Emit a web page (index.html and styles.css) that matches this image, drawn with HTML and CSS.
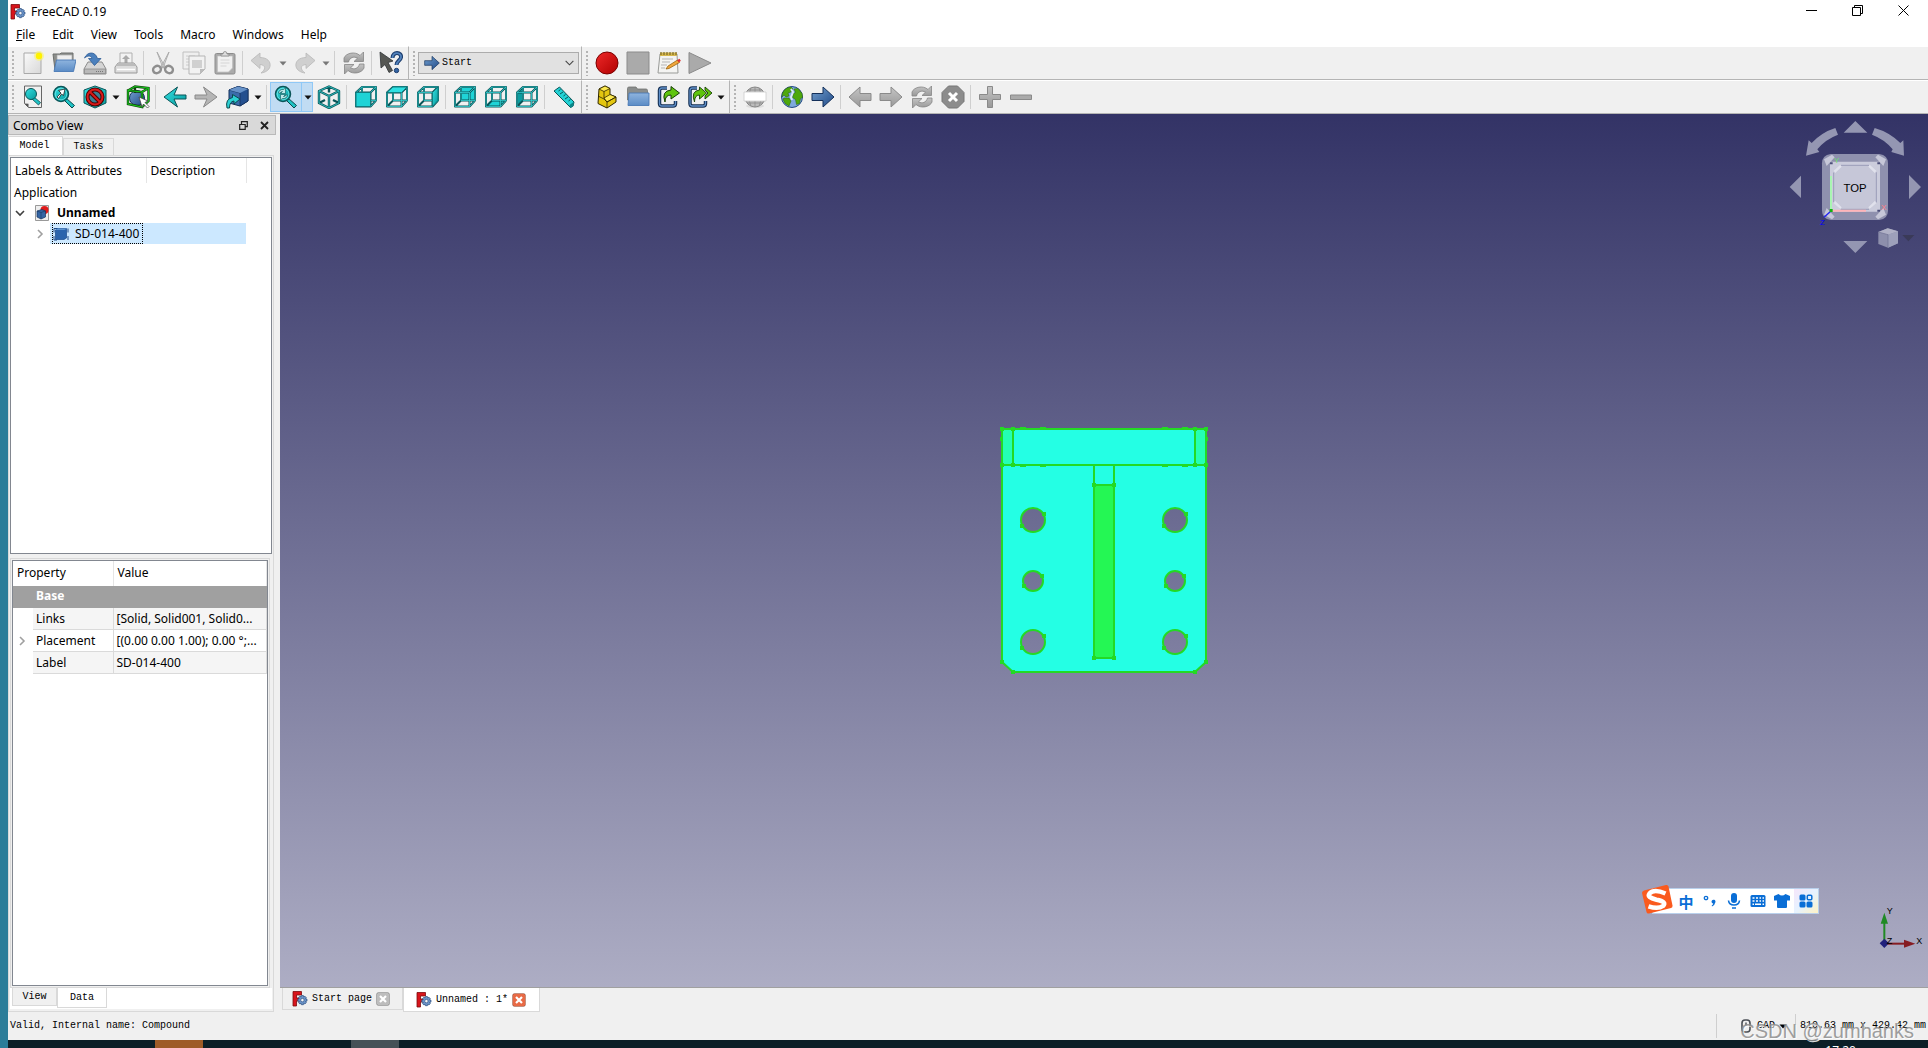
FILE: index.html
```
<!DOCTYPE html>
<html lang="en">
<head>
  <meta charset="UTF-8" />
  <meta name="viewport" content="width=device-width, initial-scale=1.0" />
  <title>FreeCAD 0.19</title>
  <link rel="stylesheet" href="styles.css">
</head>
<body>
  <!-- Shared icons -->
  <svg class="defs" aria-hidden="true">
    <defs>
      <linearGradient id="cyan" x1="0" y1="0" x2="1" y2="1"><stop offset="0" stop-color="#34e0e2"/><stop offset="1" stop-color="#06989a"/></linearGradient>
      <linearGradient id="blue" x1="0" y1="0" x2="1" y2="1"><stop offset="0" stop-color="#729fcf"/><stop offset="1" stop-color="#204a87"/></linearGradient>
      <linearGradient id="grey" x1="0" y1="0" x2="0" y2="1"><stop offset="0" stop-color="#c4c4c4"/><stop offset="1" stop-color="#999"/></linearGradient>
      <linearGradient id="paper" x1="0" y1="0" x2="1" y2="1"><stop offset="0" stop-color="#fafafa"/><stop offset="1" stop-color="#d8d8d8"/></linearGradient>
      <linearGradient id="folder" x1="0" y1="0" x2="0" y2="1"><stop offset="0" stop-color="#8fb4de"/><stop offset="1" stop-color="#5b8cc6"/></linearGradient>
      <linearGradient id="red" x1="0" y1="0" x2="1" y2="1"><stop offset="0" stop-color="#ef2929"/><stop offset="1" stop-color="#b00000"/></linearGradient>
    </defs>
    <symbol id="i-app" viewBox="0 0 16 16">
      <path d="M1 .500h8.500v3.500H4.500v3H7v3H4.500v5H1z" fill="#d8141c" stroke="#7c0a0e" stroke-width=".8"/>
      <path d="M9.400 4.500h2l.3 1.500 1.200-.8 1.400 1.400-.8 1.200 1.500.3v2l-1.500.3.8 1.200-1.400 1.400-1.200-.8-.3 1.500h-2l-.3-1.500-1.200.8-1.400-1.400.8-1.200-1.500-.3v-2l1.500-.3-.8-1.200 1.400-1.400 1.200.8z" fill="#6b94c9" stroke="#2a4d80" stroke-width=".7"/>
      <circle cx="10.400" cy="9.100" r="1.700" fill="#f4f4f4" stroke="#2a4d80" stroke-width=".6"/>
    </symbol>
    <symbol id="i-lens" viewBox="0 0 24 24">
      <path d="M14 13l8.500 7.500-2.500 2.500-8-8z" fill="#1fc3c6" stroke="#0b4a4d"/>
      <circle cx="9" cy="9" r="7.500" fill="url(#cyan)" stroke="#0b5558" stroke-width="1.500"/>
      <circle cx="9" cy="9" r="5.800" fill="none" stroke="#7beaec" stroke-width=".7"/>
    </symbol>
    <symbol id="i-wire" viewBox="0 0 24 24">
      <path d="M2 7.500h14.500v14H2zM8 2h14v13.500H8zM2 7.500L8 2M16.500 7.500L22 2M16.500 21.500L22 15.500M2 21.500l6-6" fill="none" stroke="#0a5558" stroke-width="2" stroke-linejoin="round"/>
      <path d="M2 7.500h14.500v14H2zM8 2h14v13.500H8M8 2v13.500M2 7.500L8 2M16.500 7.500L22 2M16.500 21.500L22 15.500" fill="none" stroke="#35cfd2" stroke-width=".8"/>
    </symbol>
    <symbol id="i-arrow-r" viewBox="0 0 24 24"><path d="M1 8.500h11V2l11 10-11 10v-6.500H1z"/></symbol>
    <symbol id="i-arrow-l" viewBox="0 0 24 24"><path d="M23 8.500H12V2L1 12l11 10v-6.500h11z"/></symbol>
    <symbol id="i-thin-l" viewBox="0 0 24 24"><path d="M23 10H11l3.500-8L1 12l13.500 10-3.500-8h12z"/></symbol>
    <symbol id="i-thin-r" viewBox="0 0 24 24"><path d="M1 10h12L9.500 2 23 12 9.500 22l3.500-8H1z"/></symbol>
    <symbol id="i-refresh" viewBox="0 0 24 24">
      <path d="M2 11V7c2-5 11-7 16-2.500L21.500 1v9.500H12l3.500-3.300C12 5 7.500 6.500 6.500 11z" fill="url(#grey)" stroke="#858585" stroke-width=".8"/>
      <path d="M22 13v4c-2 5-11 7-16 2.500L2.500 23v-9.500H12l-3.500 3.300C12 19 16.500 17.500 17.500 13z" fill="url(#grey)" stroke="#858585" stroke-width=".8"/>
    </symbol>
    <symbol id="i-folder" viewBox="0 0 24 24">
      <path d="M1.500 3.500q0-1.500 1.500-1.500h7l1.500 2H20q1.500 0 1.500 1.500V15h-20z" fill="#8a8d8c" stroke="#70726f" stroke-width=".8"/>
      <path d="M3 8h20v12.500H2z" fill="url(#folder)" stroke="#4a79b5" stroke-width=".9"/>
    </symbol>
    <symbol id="i-down" viewBox="0 0 8 5"><path d="M.5.500h7L4 4.500z" fill="currentColor"/></symbol>
    <symbol id="i-close" viewBox="0 0 14 14">
      <rect x=".5" y=".5" width="13" height="13" rx="2" fill="currentColor" stroke="#0003"/>
      <path d="M4 4l6 6M10 4l-6 6" stroke="#fff" stroke-width="2.200"/>
    </symbol>
  </svg>

  <div class="desktop-edge"></div>
  <div class="app">
    <header class="titlebar">
      <svg class="icon-16"><use href="#i-app"/></svg>
      <h1>FreeCAD 0.19</h1>
      <div class="window-buttons">
        <button aria-label="Minimize"><svg viewBox="0 0 11 11"><path d="M0 5.500h11" stroke="#000"/></svg></button>
        <button aria-label="Restore"><svg viewBox="0 0 11 11"><path d="M.5 2.500h8v8h-8zM2.500 2V.500h8v8H9" fill="none" stroke="#000"/></svg></button>
        <button aria-label="Close"><svg viewBox="0 0 11 11"><path d="M.5.500l10 10M10.500.500l-10 10" stroke="#000"/></svg></button>
      </div>
    </header>

    <nav class="menubar">
      <button><u>F</u>ile</button>
      <button>Edit</button>
      <button>View</button>
      <button>Tools</button>
      <button>Macro</button>
      <button>Windows</button>
      <button>Help</button>
    </nav>

    <!-- File, workbench and macro toolbars -->
    <div class="toolbar-row">
      <div class="toolbar">
        <span class="grip"></span>
        <button class="tool" aria-label="New"><svg viewBox="0 0 24 24"><path d="M3 2h17v20.500H3z" fill="url(#paper)" stroke="#a9a9a9"/><circle cx="18" cy="5" r="5" fill="#fbf36a" opacity=".6"/><circle cx="18" cy="5" r="3.200" fill="#fff200"/></svg></button>
        <button class="tool" aria-label="Open"><svg viewBox="0 0 24 24"><path d="M1 3h7l1-1h12v7l-2 10H3z" fill="#8d8f8c" stroke="#6d6f6c"/><path d="M5 4h15v9H5z" fill="#eee" stroke="#aaa" stroke-width=".7"/><path d="M4.500 9H24l-2.500 11.500H2z" fill="url(#folder)" stroke="#4a79b5" stroke-width=".9"/></svg></button>
        <button class="tool" aria-label="Save"><svg viewBox="0 0 24 24"><path d="M5 11h14l4 7v5H1v-5z" fill="#d5d5d5" stroke="#8c8c8c"/><path d="M1.500 18h21v4.500h-21z" fill="#b9b9b9" stroke="#8c8c8c" stroke-width=".8"/><path d="M13 20.500h8" stroke="#777" stroke-dasharray="1 1"/><path d="M1.500 7C4 1 12-.5 14.500 7.500H18l-6.500 7-6-7h3.300C8 4 4.500 4.500 1.500 7z" fill="#4b80bd" stroke="#2c5b96" stroke-width=".8"/></svg></button>
        <button class="tool" aria-label="Print"><svg viewBox="0 0 24 24"><path d="M6 2h12v12H6z" fill="#f2f2f2" stroke="#b0b0b0"/><path d="M12 4l4 4h-2.500v4h-3V8H8z" fill="#aaa"/><path d="M4 12h16l3 4v6H1v-6z" fill="#dcdcdc" stroke="#999"/><path d="M4 12h16l1.500 3h-19z" fill="#bbb"/><path d="M3 18.500h18" stroke="#fff" stroke-width="1.500"/></svg></button>
        <span class="sep"></span>
        <button class="tool" aria-label="Cut"><svg viewBox="0 0 24 24"><path d="M6 1l8 15-2 1zM18 1l-8 15 2 1z" fill="#e5e5e5" stroke="#a8a8a8" stroke-width=".9"/><g fill="none" stroke="#8f8f8f" stroke-width="2.500"><ellipse cx="6" cy="18.500" rx="4" ry="3.500" transform="rotate(-30 6 18.500)"/><ellipse cx="18" cy="18.500" rx="4" ry="3.500" transform="rotate(30 18 18.500)"/></g></svg></button>
        <button class="tool" aria-label="Copy"><svg viewBox="0 0 24 24"><path d="M1 1h16v17H1z" fill="#efefef" stroke="#c0c0c0"/><path d="M4 5h9M4 8h4M4 11h4M4 14h4" stroke="#ccc"/><path d="M7 5h16v13l-5 5H7z" fill="#f2f2f2" stroke="#b5b5b5"/><path d="M10 9h10v8H10z" fill="#d0d0d0"/><path d="M18 23v-5h5z" fill="#bbb"/></svg></button>
        <button class="tool" aria-label="Paste"><svg viewBox="0 0 24 24"><rect x="2" y="2.500" width="20" height="20.500" rx="1.500" fill="#aaa" stroke="#8d8d8d"/><path d="M4.500 5h15v12l-4 4h-11z" fill="#f1f1f1" stroke="#c0c0c0" stroke-width=".7"/><path d="M8 5V3h2q0-2.500 2-2.500T14 3h2v2z" fill="#ddd" stroke="#888" stroke-width=".8"/><path d="M7.500 9h9M7.500 12h9M7.500 15h6" stroke="#d5d5d5"/></svg></button>
        <span class="sep"></span>
        <button class="tool" aria-label="Undo"><svg viewBox="0 0 24 24"><path d="M1 9.500L10 2v4.500c7 0 11 4 10 9-1 4-5 6-9 6.500 5-3.500 5-8-1-8.500v4z" fill="#cfcfcf" stroke="#b8b8b8" stroke-width=".8"/></svg></button>
        <button class="drop" aria-label="Undo history"><svg><use href="#i-down"/></svg></button>
        <button class="tool" aria-label="Redo"><svg viewBox="0 0 24 24"><path d="M22 9.500L13 2v4.500c-7 0-11 4-10 9 1 4 5 6 9 6.500-5-3.500-5-8 1-8.500v4z" fill="#cfcfcf" stroke="#b8b8b8" stroke-width=".8"/></svg></button>
        <button class="drop" aria-label="Redo history"><svg><use href="#i-down"/></svg></button>
        <span class="sep"></span>
        <button class="tool" aria-label="Refresh"><svg><use href="#i-refresh"/></svg></button>
        <span class="sep"></span>
        <button class="tool" aria-label="What's this?"><svg viewBox="0 0 24 24"><path d="M1 1l13 9-5 1.500 4.500 8-3.500 2-4-8L2 17z" fill="#555753" stroke="#2e3436" stroke-width=".8"/><path d="M13.500 7c0-7 9.500-6 8.500-.5-.5 3-4.500 3.500-4.500 7.500" fill="none" stroke="#1d3e6e" stroke-width="4"/><path d="M13.500 7c0-7 9.500-6 8.500-.5-.5 3-4.500 3.500-4.500 7.500" fill="none" stroke="#5383bd" stroke-width="1.800"/><circle cx="17.500" cy="19.500" r="2.200" fill="#3465a4" stroke="#1d3e6e"/></svg></button>
      </div>
      <div class="toolbar">
        <span class="grip"></span>
        <div class="workbench">
          <svg class="icon-16" fill="url(#blue)" stroke="#14305a"><use href="#i-arrow-r"/></svg>
          <select aria-label="Workbench"><option>Start</option></select>
          <svg class="chevron" viewBox="0 0 10 6"><path d="M.7.700L5 5 9.300.700" fill="none" stroke="#444" stroke-width="1.200"/></svg>
        </div>
      </div>
      <div class="toolbar wide">
        <span class="grip"></span>
        <button class="tool" aria-label="Record macro"><svg viewBox="0 0 24 24"><circle cx="12" cy="12" r="11" fill="url(#red)" stroke="#7a0000"/></svg></button>
        <button class="tool" aria-label="Stop macro"><svg viewBox="0 0 24 24"><path d="M1 1h22v22H1z" fill="#aaa" stroke="#8b8b8b"/></svg></button>
        <button class="tool" aria-label="Macros"><svg viewBox="0 0 24 24"><path d="M3 3h17l1 19H1z" fill="#f4f4f2" stroke="#999b98"/><path d="M3 1.500h17v3.500H3z" fill="#d6b84e"/><path d="M4 1v3M7 1v3M10 1v3M13 1v3M16 1v3M19 1v3" stroke="#6a5a20"/><path d="M5 8h11M5 11h8M4 14h6M4 17h4" stroke="#b5b5b5"/><path d="M9 18l2-3L20.500 9l2 2.500L12 17.500z" fill="#f0a63c" stroke="#8f5902" stroke-width=".7"/><path d="M20 9.200l2.500-1.400 1.300 2-1.800 1.800z" fill="#dd3434"/></svg></button>
        <button class="tool" aria-label="Execute macro"><svg viewBox="0 0 24 24"><path d="M1 1.500L23 12 1 22.500z" fill="#aaa" stroke="#8b8b8b"/></svg></button>
      </div>
    </div>

    <!-- View, structure and navigation toolbars -->
    <div class="toolbar-row">
      <div class="toolbar">
        <span class="grip"></span>
        <button class="tool" aria-label="Fit all"><svg viewBox="0 0 24 24"><path d="M3.500 1h17v21.500h-13l-4-4z" fill="#f0f0f0" stroke="#666"/><path d="M3.500 18.500l4 .3v3.700z" fill="#555"/><path d="M13 12l6.500 5.500-2 2.500-6.500-6z" fill="#1fc3c6" stroke="#0b4a4d" stroke-width=".8"/><circle cx="10" cy="9" r="5.500" fill="url(#cyan)" stroke="#0b5558"/></svg></button>
        <button class="tool" aria-label="Fit selection"><svg viewBox="0 0 24 24"><use href="#i-lens"/><path d="M5 12l4-4-2.500-2.500L13 4l-1.500 6.500L9.500 9 6.500 13.500z" fill="#fff" stroke="#222" stroke-width=".8"/></svg></button>
        <button class="tool" aria-label="Draw style"><svg viewBox="0 0 24 24"><path d="M12 1l11 4v13l-11 5L1 18V5z" fill="url(#cyan)" stroke="#0b5558"/><circle cx="12" cy="12" r="7.500" fill="#3a7f94" stroke="#4c0000" stroke-width="4"/><path d="M7 7l10 10" stroke="#4c0000" stroke-width="4"/><circle cx="12" cy="12" r="7.500" fill="none" stroke="#d81b1b" stroke-width="2"/><path d="M7 7l10 10" stroke="#d81b1b" stroke-width="2"/></svg></button>
        <button class="drop dark" aria-label="Draw styles"><svg><use href="#i-down"/></svg></button>
        <button class="tool" aria-label="Bounding box"><svg viewBox="0 0 24 24"><circle cx="11" cy="13" r="7.500" fill="url(#blue)" stroke="#17355f"/><path d="M2 5.500l14 1.500v15L2 19zM2 5.500L9 1.500l13.500 1.500v13L16 22M16 7l6.500-4M9 1.500V8" fill="none" stroke="#123f10" stroke-width="2.400"/><path d="M2 5.500l14 1.500v15L2 19zM2 5.500L9 1.500l13.500 1.500v13L16 22M16 7l6.500-4" fill="none" stroke="#17c51a" stroke-width="1.200"/><path d="M13 12l9 4-3 1.500 4 4-1.500 1.500-4-4-1.500 3z" fill="#fff" stroke="#444" stroke-width=".8"/></svg></button>
        <span class="sep"></span>
        <button class="tool" aria-label="Go back"><svg fill="url(#cyan)" stroke="#0b5558"><use href="#i-thin-l"/></svg></button>
        <button class="tool" aria-label="Go forward"><svg fill="#b5b5b5" stroke="#8a8a8a"><use href="#i-thin-r"/></svg></button>
        <button class="tool" aria-label="Linked object"><svg viewBox="0 0 24 24"><path d="M4 5l9-3.500L23 4v12l-8 5-11-3z" fill="#3b6cab" stroke="#14305a"/><path d="M4 5l11 3v13l8-5V4l-10-2.500z" fill="#25508f" stroke="#14305a" stroke-width=".8"/><path d="M4 5l9-3.500L23 4l-8 4z" fill="#6792c8"/><path d="M2 23q-2-9 5.500-10.500V9.500L15 14l-6 5v-3q-4.500.5-4.500 7z" fill="#2cd0d3" stroke="#0b4a4d"/></svg></button>
        <button class="drop dark" aria-label="Link navigation"><svg><use href="#i-down"/></svg></button>
        <span class="sep"></span>
        <div class="split">
          <button class="tool" aria-label="Sync view"><svg viewBox="0 0 24 24"><use href="#i-lens"/><path d="M4.500 8q1-4 5-3.500l2-1.500v5.500H6.500l2-2q-2 0-2.500 2zM13.500 10q-1 4-5 3.500l-2 1.500V9.500h5l-2 2q2 0 2.500-1.500z" fill="#bfe8ea" stroke="#0b5558" stroke-width=".6"/></svg></button>
          <button class="drop dark" aria-label="Sync view options"><svg><use href="#i-down"/></svg></button>
        </div>
        <button class="tool" aria-label="Isometric"><svg viewBox="0 0 24 24"><path d="M12 1.500l10 4.500v12l-10 5-10-5V6zM2 6l10 5 10-5M12 11v12M12 1.500v6M2 18l6-3M22 18l-6-3" fill="none" stroke="#0a5558" stroke-width="2.400" stroke-linejoin="round"/><path d="M12 1.500l10 4.500v12l-10 5-10-5V6zM2 6l10 5 10-5M12 11v12" fill="none" stroke="#35cfd2" stroke-width=".8"/></svg></button>
        <span class="sep"></span>
        <button class="tool" aria-label="Front"><svg viewBox="0 0 24 24"><use href="#i-wire"/><path d="M2 7.500h14.500v14H2z" fill="#1fd3d6" stroke="#0a6a6d" stroke-width=".8"/></svg></button>
        <button class="tool" aria-label="Top"><svg viewBox="0 0 24 24"><use href="#i-wire"/><path d="M2 7.500L8 2h14l-5.500 5.500z" fill="#2ee0e2" stroke="#0a6a6d" stroke-width=".8"/></svg></button>
        <button class="tool" aria-label="Right"><svg viewBox="0 0 24 24"><use href="#i-wire"/><path d="M16.500 7.500L22 2v13.500l-5.500 6z" fill="url(#cyan)" stroke="#0a6a6d" stroke-width=".8"/></svg></button>
        <span class="sep"></span>
        <button class="tool" aria-label="Rear"><svg viewBox="0 0 24 24"><path d="M8 2h14v13.500H8z" fill="#1fd3d6"/><use href="#i-wire"/></svg></button>
        <button class="tool" aria-label="Bottom"><svg viewBox="0 0 24 24"><path d="M2 21.500l6-6h14l-5.500 6z" fill="#1fd3d6"/><use href="#i-wire"/></svg></button>
        <button class="tool" aria-label="Left"><svg viewBox="0 0 24 24"><path d="M2 7.500L8 2v13.500l-6 6z" fill="#0b9da0"/><use href="#i-wire"/></svg></button>
        <span class="sep"></span>
        <button class="tool" aria-label="Measure"><svg viewBox="0 0 24 24"><path d="M2 6l5.500-4L22 17l-1 4-2.500 1.500z" fill="#23d2d5" stroke="#0b5558"/><path d="M17.500 20l4-3v4l-3 2z" fill="#0b8587"/><path d="M8.500 4.500l-2 1.500M11 7L8 9M13.500 9.500l-2 1.500M16 12l-3 2M18.500 14.500l-2 1.500" stroke="#0b5558"/></svg></button>
      </div>
      <div class="toolbar">
        <span class="grip"></span>
        <button class="tool" aria-label="Create part"><svg viewBox="0 0 24 24"><path d="M4 4l6-3 5 2.500v6l6 2.500v5L12 23l-9-4.500z" fill="#e3c610" stroke="#2f2700"/><path d="M4 4l6-3 5 2.500-6 3zM9 13l6-3.500 6 2.500-9 5z" fill="#fce94f" stroke="#2f2700" stroke-width=".8"/><path d="M9 6.500V13M3 11l6 3 3 3v6M12 17l9-5" fill="none" stroke="#2f2700" stroke-width=".8"/></svg></button>
        <button class="tool" aria-label="Create group"><svg><use href="#i-folder"/></svg></button>
        <button class="tool" aria-label="Make link"><svg viewBox="0 0 24 24"><path d="M10 3H5Q2.500 3 2.500 5.500v13Q2.500 21 5 21h11q2.500 0 2.500-2.500V16" fill="none" stroke="#152f52" stroke-width="3.500"/><path d="M10 3H5Q2.500 3 2.500 5.500v13Q2.500 21 5 21h11q2.500 0 2.500-2.500V16" fill="none" stroke="#5f8fc8" stroke-width="1.300"/><path d="M8 17q-4-11 6-12V1.500L22.500 8 14 14v-4q-6 0-6 7z" fill="#5fc40d" stroke="#173f04"/></svg></button>
        <button class="tool" aria-label="Link actions"><svg viewBox="0 0 24 24"><path d="M9 3H4.500Q2 3 2 5.500v13Q2 21 4.500 21H15q2.500 0 2.500-2.500V16" fill="none" stroke="#152f52" stroke-width="3.500"/><path d="M9 3H4.500Q2 3 2 5.500v13Q2 21 4.500 21H15q2.500 0 2.500-2.500V16" fill="none" stroke="#5f8fc8" stroke-width="1.300"/><path d="M6.500 17q-4-11 5-12V2l7 6-7 6v-4q-5 0-5 7zM17 2l7 6-7 6v-3l3-3-3-3z" fill="#5fc40d" stroke="#173f04" stroke-width=".9"/></svg></button>
        <button class="drop dark" aria-label="More link actions"><svg><use href="#i-down"/></svg></button>
      </div>
      <div class="toolbar wide">
        <span class="grip"></span>
        <button class="tool" aria-label="Open website"><svg viewBox="0 0 24 24"><ellipse cx="12" cy="21" rx="9" ry="2" fill="#ddd"/><circle cx="12" cy="12" r="10" fill="#bbb" stroke="#888"/><path d="M5 5h14M4 18h16M12 2v20M8 3q-4 9 0 18M16 3q4 9 0 18" fill="none" stroke="#888" stroke-width=".7"/><path d="M1 7h22v9H1z" fill="#fff" stroke="#ccc" stroke-width=".8"/></svg></button>
        <span class="sep"></span>
        <button class="tool" aria-label="Start page"><svg viewBox="0 0 24 24"><circle cx="12" cy="12" r="10.500" fill="#7ea9dc" stroke="#234a85"/><path d="M4 5.500Q7 2 11 2l2 2-2 3-3 1 1 3-3 1-2-2-2 2q0-4 2-6.500zM4 13l5 0 2 3-2 5q-5-2-6-7zM14 4l4-.5 4 5 .5 4-2 1-1 5-3 1-1-5-3-2 1-4 2-1z" fill="#4ea80d" stroke="#2a6304" stroke-width=".5"/><path d="M11 4l2 3-2 5 1 3" stroke="#dce9f7" stroke-width="2" fill="none"/></svg></button>
        <button class="tool" aria-label="Go"><svg fill="url(#blue)" stroke="#14305a"><use href="#i-arrow-r"/></svg></button>
        <span class="sep"></span>
        <button class="tool" aria-label="Previous page"><svg fill="url(#grey)" stroke="#8a8a8a"><use href="#i-arrow-l"/></svg></button>
        <button class="tool" aria-label="Next page"><svg fill="url(#grey)" stroke="#8a8a8a"><use href="#i-arrow-r"/></svg></button>
        <button class="tool" aria-label="Reload page"><svg><use href="#i-refresh"/></svg></button>
        <button class="tool" aria-label="Stop loading"><svg viewBox="0 0 24 24"><path d="M7.500 1h9L23 7.500v9L16.500 23h-9L1 16.500v-9z" fill="#8c8c8c" stroke="#777"/><path d="M8 8l8 8M16 8l-8 8" stroke="#fff" stroke-width="3"/></svg></button>
        <span class="sep"></span>
        <button class="tool" aria-label="Zoom in"><svg viewBox="0 0 24 24"><path d="M9.500 1.500h5v8h8v5h-8v8h-5v-8h-8v-5h8z" fill="url(#grey)" stroke="#8a8a8a"/></svg></button>
        <button class="tool" aria-label="Zoom out"><svg viewBox="0 0 24 24"><path d="M1.500 10h21v4.500h-21z" fill="#aaa" stroke="#8a8a8a"/></svg></button>
      </div>
    </div>

    <main class="workspace">
      <!-- Combo view -->
      <aside class="dock">
        <div class="dock-title">
          <h2>Combo View</h2>
          <button aria-label="Float"><svg viewBox="0 0 9 9"><path d="M.7 3.500h5.500v4.800H.700zM2.500 3V.700h5.800v5H6.500" fill="none" stroke="#222" stroke-width="1.200"/></svg></button>
          <button aria-label="Close panel"><svg viewBox="0 0 9 9"><path d="M1 1l7 7M8 1L1 8" stroke="#222" stroke-width="1.800"/></svg></button>
        </div>
        <div class="tabs-north">
          <button class="active">Model</button>
          <button>Tasks</button>
        </div>
        <div class="pane">
          <div class="tree">
            <table>
              <colgroup><col class="col-label"><col class="col-desc"><col></colgroup>
              <thead><tr><th>Labels &amp; Attributes</th><th>Description</th><th></th></tr></thead>
              <tbody>
                <tr class="root"><td colspan="3">Application</td></tr>
                <tr><td colspan="3">
                  <div class="node">
                    <svg class="arrow" viewBox="0 0 10 10"><path d="M1 3l4 4 4-4" fill="none" stroke="#404040" stroke-width="1.600"/></svg>
                    <svg class="icon-16" viewBox="0 0 16 16"><path d="M1.500.500h13v15h-13z" fill="#eee" stroke="#999"/><circle cx="10.500" cy="5" r="4" fill="#e01b1b"/><path d="M3 6l5-1.500 3.500 1.500v6L7 14l-4-2z" fill="#3465a4" stroke="#17355f" stroke-width=".7"/><path d="M3 6l4 1.500 4.500-1.500M7 7.500V14" fill="none" stroke="#17355f" stroke-width=".6"/></svg>
                    <b>Unnamed</b>
                  </div>
                </td></tr>
                <tr><td colspan="2">
                  <div class="node child">
                    <svg class="arrow" viewBox="0 0 10 10"><path d="M3 1l4 4-4 4" fill="none" stroke="#a0a0a0" stroke-width="1.600"/></svg>
                    <div class="selected">
                      <span class="focus">
                        <svg class="icon-16" viewBox="0 0 16 16"><path d="M1 2.500h4M1 2.500v4M15 2.500v4M1 14v-4M1 14h3M15 14v-4" stroke="#204a87" fill="none"/><path d="M2.500 4l2-1.500h9V12L11 13.500H2.500z" fill="#2a64ad" stroke="#17498c" stroke-width=".7"/><path d="M2.500 4l2-1.500h9L11.500 4z" fill="#5c92d0"/></svg>
                        SD-014-400
                      </span>
                    </div>
                  </div>
                </td><td></td></tr>
              </tbody>
            </table>
          </div>
          <div class="props-group">
            <div class="props-frame">
              <div class="props">
                <table>
                  <colgroup><col class="col-branch"><col class="col-prop"><col></colgroup>
                  <thead><tr><th colspan="2">Property</th><th>Value</th></tr></thead>
                  <tbody>
                    <tr class="group"><td></td><td colspan="2">Base</td></tr>
                    <tr class="alt"><td></td><td>Links</td><td>[Solid, Solid001, Solid0...</td></tr>
                    <tr><td><svg class="arrow" viewBox="0 0 10 10"><path d="M3 1l4 4-4 4" fill="none" stroke="#a0a0a0" stroke-width="1.600"/></svg></td><td>Placement</td><td>[(0.00 0.00 1.00); 0.00 °;...</td></tr>
                    <tr class="alt"><td></td><td>Label</td><td>SD-014-400</td></tr>
                  </tbody>
                </table>
              </div>
            </div>
            <div class="tabs-south">
              <button>View</button>
              <button class="active">Data</button>
            </div>
          </div>
        </div>
      </aside>

      <section class="mdi">
        <div class="viewport">
          <!-- Part seen from above -->
          <svg class="model" viewBox="20 17 208 247">
            <path fill="#24ffe4" fill-rule="evenodd" d="M22 19H226V252L215 262H33L22 252zM41 110a12 12 0 1 0 24 0a12 12 0 1 0-24 0zM183 110a12 12 0 1 0 24 0a12 12 0 1 0-24 0zM43 171a10 10 0 1 0 20 0a10 10 0 1 0-20 0zM185 171a10 10 0 1 0 20 0a10 10 0 1 0-20 0zM41 232a12 12 0 1 0 24 0a12 12 0 1 0-24 0zM183 232a12 12 0 1 0 24 0a12 12 0 1 0-24 0z"/>
            <path fill="#24ffb4" d="M22 19h11v36H22zM215 19h11v36h-11z"/>
            <path fill="#24f754" d="M114 75h20v173h-20z"/>
            <g fill="none" stroke="#24d924" stroke-width="2">
              <path d="M22 19H226V252L215 262H33L22 252zM22 55H226M33 19v36M215 19v36M114 55v193h20V55M114 75h20"/>
              <circle cx="53" cy="110" r="12"/><circle cx="195" cy="110" r="12"/>
              <circle cx="53" cy="171" r="10"/><circle cx="195" cy="171" r="10"/>
              <circle cx="53" cy="232" r="12"/><circle cx="195" cy="232" r="12"/>
            </g>
            <path fill="#24d924" d="M20 17h4v4h-4zM31 17h4v4h-4zM213 17h4v4h-4zM224 17h4v4h-4zM20 27h3v4h-3zM225 27h3v4h-3zM20 53h4v4h-4zM31 53h4v4h-4zM213 53h4v4h-4zM224 53h4v4h-4zM112 73h4v4h-4zM132 73h4v4h-4zM112 246h4v4h-4zM132 246h4v4h-4zM20 250h4v4h-4zM224 250h4v4h-4zM31 260h4v4h-4zM213 260h4v4h-4zM40 17h6v2h-6zM60 17h6v2h-6zM182 17h6v2h-6zM202 17h6v2h-6zM40 55h6v2h-6zM60 55h6v2h-6zM182 55h6v2h-6zM202 55h6v2h-6zM62 102h4v4h-4zM40 114h4v4h-4zM204 102h4v4h-4zM182 114h4v4h-4zM60 164h4v4h-4zM42 174h4v4h-4zM202 164h4v4h-4zM184 174h4v4h-4zM62 224h4v4h-4zM40 236h4v4h-4zM204 224h4v4h-4zM182 236h4v4h-4z"/>
          </svg>

          <!-- Navigation cube -->
          <svg class="navcube" viewBox="45 42 429 468">
            <g fill="#9496b2">
              <path d="M256 63l36 35h-71zM256 459l-36-36h72zM59 261l34-34v67zM453 261l-36-36v72z"/>
              <path d="M196 84l8 20q-38 14-62 44l6 8-40 11 8-46 9 8q30-32 71-45zM314 84l-8 20q38 14 62 44l-4 8 38 11-2-46-9 8q-32-32-77-45z"/>
            </g>
            <path d="M182 162h146q26 4 26 28v142q0 24-26 28H182q-26-4-26-28V190q0-24 26-28z" fill="#8f91ae"/>
            <path d="M162 178l24-14 8 8-24 26zM348 178l-24-14-8 8 24 26zM162 344l24 14 8-8-24-26zM348 344l-24 14-8-8 24-26z" fill="#c6c7d8"/>
            <path d="M180 185h150v150H180z" fill="#cbccdc"/>
            <path d="M213 196h84l22 22v88l-22 22h-84l-22-22v-88z" fill="#c6c7d8" stroke="#9b9db8" stroke-width="3"/>
            <path d="M191 212l20-18 4 6-20 20zM319 212l-20-18-4 6 20 20zM191 310l20 18 4-6-20-20zM319 310l-20 18-4-6 20-20z" fill="#e0e1ec"/>
            <path d="M180 187h8v6h-8zM322 187h8v6h-8zM322 329h8v6h-8z" fill="#4a4d78"/>
            <path d="M183 228v104" stroke="#a9f5b2" stroke-width="6"/>
            <path d="M186 332h102" stroke="#ffb4b8" stroke-width="6"/>
            <path d="M184 332l-22 20" stroke="#2222f0" stroke-width="4"/>
            <path d="M179 327h9v9h-9z" fill="#12b012"/>
            <text x="255" y="275" class="cube-face">TOP</text>
            <text x="200" y="189" class="cube-axis axis-y">Y</text>
            <text x="341" y="329" class="cube-axis axis-x">X</text>
            <text x="157" y="374" class="cube-axis axis-z">Z</text>
            <path d="M325 396l28-11 31 9v36l-30 13-29-11z" fill="#8d8fac"/>
            <path d="M325 396l28-11 31 9-30 10z" fill="#b0b1c6"/>
            <path d="M354 404l30-10v36l-30 13z" fill="#9da0ba"/>
            <path d="M325 396l29 8v39" fill="none" stroke="#6e7092" stroke-width="2"/>
            <path d="M397 405h36l-18 19z" fill="#3a3a58"/>
          </svg>

          <!-- Axis cross -->
          <svg class="axis" viewBox="774 135 150 135">
            <path d="M793 250v-62" stroke="#1f8a24" stroke-width="6"/>
            <path d="M793 158l11 33h-22z" fill="#1f8a24"/>
            <path d="M793 251h62" stroke="#861c22" stroke-width="6"/>
            <path d="M886 251l-34-12v24z" fill="#861c22"/>
            <path d="M793 236l14 14-14 14-14-14z" fill="#20207c"/>
            <text x="800" y="161">Y</text>
            <text x="889" y="251">X</text>
            <text x="800" y="251">Z</text>
          </svg>

          <!-- Input method bar -->
          <div class="ime">
            <svg class="ime-logo" viewBox="0 0 32 32"><path d="M3 6.500L25 1q2-.5 2.500 1.500l4 19q.3 2-1.500 2.500L8 29.500q-2 .5-2.500-1.500L1 9q0-2 2-2.500z" fill="#fa5a1e"/><path d="M24.500 9.500Q13 4.500 8.500 9.500q-3 4 7 6.200 11 2 6.500 6.300-5 3.500-14.500.3" fill="none" stroke="#fff" stroke-width="4.500"/></svg>
            <button>中</button>
            <button aria-label="Punctuation"><svg viewBox="0 0 16 16"><circle cx="4" cy="5" r="1.700" fill="none" stroke="currentColor" stroke-width="1.300"/><path d="M9.500 8.500a2 2 0 1 1 3.500 1.500q-.5 3-3 3.500l-.3-1q1.300-.6 1.500-2-1.700-.2-1.700-2z"/></svg></button>
            <button aria-label="Voice"><svg viewBox="0 0 16 16"><rect x="5" y="0" width="6" height="10" rx="3"/><path d="M2.500 7.500q.5 4.500 5.500 4.500t5.500-4.500M6 15h4" fill="none" stroke="currentColor" stroke-width="1.600"/></svg></button>
            <button aria-label="Keyboard"><svg viewBox="0 0 16 16"><rect x=".5" y="2" width="15" height="12" rx="1.500"/><path d="M2.500 5h2M6 5h2M9.500 5h1.500M12.500 5h1.500M2.500 8h2M6 8h2M9.500 8h1.500M12.500 8h1.500M2.500 11.300h1.500M5 11.300h6M12.500 11.300h1.500" stroke="#fff" stroke-width="1.500"/></svg></button>
            <button aria-label="Skins"><svg viewBox="0 0 16 16"><path d="M4.500 1q3.500 3 7 0L16 3v4.500h-3V14q0 1-1 1H4q-1 0-1-1V7.500H0V3z"/></svg></button>
            <button class="ime-more" aria-label="Toolbox"><svg viewBox="0 0 16 16"><rect x="1.500" y="1.500" width="6" height="6" rx="1.500"/><rect x="1.500" y="8.500" width="6" height="6" rx="1.500"/><rect x="8.500" y="8.500" width="6" height="6" rx="1.500"/><rect x="9.300" y="2.200" width="4.500" height="4.500" rx="1" fill="none" stroke="currentColor" stroke-width="1.500"/></svg></button>
          </div>
        </div>

        <div class="doc-tabs">
          <div class="doc-tab">
            <svg class="icon-16"><use href="#i-app"/></svg>
            <button>Start page</button>
            <button class="tab-close" aria-label="Close Start page"><svg><use href="#i-close"/></svg></button>
          </div>
          <div class="doc-tab active">
            <svg class="icon-16"><use href="#i-app"/></svg>
            <button>Unnamed : 1*</button>
            <button class="tab-close" aria-label="Close Unnamed"><svg><use href="#i-close"/></svg></button>
          </div>
        </div>
      </section>
    </main>

    <footer class="statusbar">
      <p>Valid, Internal name: Compound</p>
      <button class="nav-style">
        <svg class="mouse" viewBox="0 0 10 14"><rect x="1" y="1" width="8" height="12" rx="3" fill="none" stroke="#4a4f55" stroke-width="1.600"/><path d="M5 3.500v3" stroke="#4a4f55" stroke-width="1.400"/></svg>
        CAD
        <svg class="caret"><use href="#i-down"/></svg>
      </button>
      <span class="dimensions">810.63 mm x 429.42 mm</span>
      <span class="watermark">CSDN @zumhanks</span>
    </footer>

    <div class="taskbar">
      <span class="task orange"></span>
      <span class="task"></span>
      <time>17:20</time>
    </div>
  </div>
</body>
</html>
```
FILE: styles.css
```
/* Base */
* {
  box-sizing: border-box;
}

body {
  margin: 0;
  display: flex;
  height: 100vh;
  overflow: hidden;
  background: #f0f0f0;
  color: #000;
  font-family: "Noto Sans", "Noto Sans CJK SC", sans-serif;
  font-size: 12px;
  line-height: 16px;
}

button,
select {
  margin: 0;
  padding: 0;
  border: none;
  background: none;
  color: inherit;
  font: inherit;
}

h1,
h2,
p {
  margin: 0;
  font-size: 12px;
  font-weight: normal;
}

svg {
  display: block;
  flex: none;
}

.defs {
  position: absolute;
  width: 0;
  height: 0;
}

.icon-16 {
  width: 16px;
  height: 16px;
}

.arrow {
  width: 10px;
  height: 10px;
}

.desktop-edge {
  width: 8px;
  background: #2c7d99;
}

.app {
  flex: 1;
  min-width: 0;
  display: flex;
  flex-direction: column;
}

/* Title and menus */
.titlebar {
  display: flex;
  align-items: center;
  gap: 5px;
  height: 24px;
  padding: 0 2px;
  background: #fff;
}

.window-buttons {
  display: flex;
  margin-left: auto;
}

.window-buttons button {
  display: flex;
  justify-content: center;
  width: 46px;
  padding-bottom: 4px;
}

.window-buttons svg {
  width: 11px;
  height: 11px;
}

.menubar {
  display: flex;
  gap: 1px;
  height: 22px;
  background: #fff;
}

.menubar button {
  padding: 0 8px;
}

/* Toolbars */
.toolbar-row {
  display: flex;
  height: 34px;
}

.toolbar {
  display: flex;
  align-items: center;
  padding-right: 2px;
  border-top: 1px solid #fff;
  border-right: 1px solid #b4b4b4;
  border-bottom: 1px solid #b4b4b4;
}

.toolbar.wide {
  flex: 1;
  border-right: none;
}

.grip {
  width: 9px;
  height: 26px;
  background: radial-gradient(circle, #b4b4b4 1px, transparent 1px) 3px 0 / 4px 4px repeat-y;
}

.tool {
  display: flex;
  align-items: center;
  justify-content: center;
  width: 31px;
  height: 30px;
}

.tool svg {
  width: 24px;
  height: 24px;
}

.drop {
  display: flex;
  align-items: center;
  justify-content: center;
  width: 12px;
  height: 28px;
  color: #777;
}

.drop.dark {
  color: #111;
}

.drop svg {
  width: 8px;
  height: 5px;
}

.sep {
  width: 2px;
  height: 24px;
  margin: 0 2px;
  border-left: 1px solid #cfcfcf;
}

.split {
  display: flex;
  background: #c1dcf3;
  outline: 1px solid #90c8f6;
  outline-offset: -1px;
}

.split .drop {
  height: 30px;
  border-left: 1px solid #90c8f6;
}

.workbench {
  display: flex;
  align-items: center;
  width: 161px;
  height: 22px;
  padding: 0 4px 0 5px;
  border: 1px solid #acacac;
  background: #e1e1e1;
}

.workbench select {
  appearance: none;
  flex: 1;
  padding-left: 2px;
}

.chevron {
  width: 9px;
  height: 6px;
}

/* Fixed-width text of tabs and status */
.workbench select,
.tabs-north,
.tabs-south,
.doc-tabs,
.statusbar,
.statusbar p {
  font-family: "Liberation Mono", monospace;
  font-size: 10px;
}

/* Workspace */
.workspace {
  flex: 1;
  min-height: 0;
  display: flex;
  gap: 4px;
}

.dock {
  width: 268px;
  padding-top: 1px;
  display: flex;
  flex-direction: column;
}

.dock-title {
  display: flex;
  align-items: center;
  gap: 12px;
  height: 20px;
  padding: 1px 6px 0 4px;
  border: 1px solid #b9b9b9;
  background: #d9d9d9;
}

.dock-title h2 {
  flex: 1;
}

.dock-title svg {
  width: 9px;
  height: 9px;
}

.tabs-north {
  display: flex;
  align-items: flex-end;
  height: 20px;
}

.tabs-north button {
  width: 51px;
  height: 17px;
  border: 1px solid #d9d9d9;
  border-bottom: none;
}

.tabs-north .active {
  width: 55px;
  height: 19px;
  padding-right: 2px;
  background: #fff;
}

.pane {
  flex: 1;
  min-height: 0;
  width: 266px;
  padding: 1px 1px 2px;
  display: flex;
  flex-direction: column;
  gap: 4px;
  border: 1px solid #d9d9d9;
}

.tree {
  flex: 396 1 0;
  min-height: 0;
  border: 1px solid #828790;
  background: #fff;
}

table {
  width: 100%;
  border-collapse: collapse;
  table-layout: fixed;
}

th,
td {
  padding: 0;
  text-align: left;
  font-weight: normal;
  white-space: nowrap;
}

.col-label {
  width: 135px;
}

.col-desc {
  width: 100px;
}

.tree th {
  height: 25px;
  padding-left: 4px;
  border-right: 1px solid #e5e5e5;
}

.tree th:last-child {
  border-right: none;
}

.tree td {
  height: 20px;
}

.tree .root td {
  padding-left: 3px;
}

.node {
  display: flex;
  align-items: center;
  gap: 6px;
  padding-left: 4px;
}

.node .icon-16 {
  margin: 0 1px 0 3px;
}

.node.child {
  gap: 5px;
  padding-left: 24px;
}

.selected {
  flex: 1;
  display: flex;
  background: #cce8ff;
  padding-left: 2px;
}

.focus {
  display: flex;
  align-items: center;
  gap: 6px;
  height: 21px;
  padding-right: 4px;
  outline: 1px dotted #000;
  outline-offset: -1px;
}

.focus .icon-16 {
  margin: 0 0 0 1px;
}

.props-group {
  flex: 453 1 0;
  min-height: 0;
  display: flex;
  flex-direction: column;
  width: 260px;
}

.props-frame {
  flex: 1;
  min-height: 0;
  display: flex;
  padding: 1px;
  border: 1px solid #d9d9d9;
}

.props {
  flex: 1;
  min-width: 0;
  overflow: hidden;
  border: 1px solid #828790;
  background: #fff;
}

.col-branch {
  width: 20px;
}

.col-prop {
  width: 80px;
}

.props th {
  height: 25px;
  padding-left: 4px;
  border-right: 1px solid #e5e5e5;
}

.props td {
  height: 22px;
  padding-left: 3px;
  border-right: 1px solid #dadada;
  border-bottom: 1px solid #dadada;
}

.props td:first-child {
  padding-left: 4px;
  border: none;
}

.props .alt td + td {
  background: #f5f5f5;
}

.props .group td {
  border-color: #a0a0a0;
  background: #a0a0a0;
  color: #fff;
  font-weight: bold;
}

.tabs-south {
  display: flex;
  align-items: flex-start;
  width: 262px;
  height: 21px;
  background: #fff;
}

.tabs-south button {
  width: 45px;
  height: 18px;
  margin-left: 2px;
  border: 1px solid #d9d9d9;
  border-top: none;
  background: #f0f0f0;
}

.tabs-south .active {
  width: 50px;
  height: 20px;
  margin-left: 0;
  background: #fff;
}

/* Document area */
.mdi {
  flex: 1;
  min-width: 0;
  display: flex;
  flex-direction: column;
}

.viewport {
  position: relative;
  flex: 1;
  display: flex;
  align-items: center;
  justify-content: center;
  background: linear-gradient(#333366, #adadc4);
}

.model {
  width: 208px;
  height: 247px;
}

.navcube {
  position: absolute;
  top: 0;
  right: 0;
  width: 143px;
  height: 156px;
}

.cube-face {
  font: 34px "Liberation Sans Narrow", "Liberation Sans", sans-serif;
  text-anchor: middle;
}

.cube-axis {
  font: 24px "Liberation Sans", sans-serif;
  text-anchor: middle;
}

.axis-x {
  fill: #ff7d86;
}

.axis-y {
  fill: #6be070;
}

.axis-z {
  fill: #0000ff;
}

.axis {
  position: absolute;
  right: 0;
  bottom: 37px;
  width: 50px;
  height: 45px;
  font: 27px "Liberation Sans", sans-serif;
}

.ime {
  position: absolute;
  right: 109px;
  bottom: 73px;
  display: flex;
  align-items: center;
  height: 26px;
  border: 1px solid #b9d0ec;
  background: #fff;
}

.ime-logo {
  width: 32px;
  height: 32px;
  margin: 0 1px 3px -12px;
}

.ime button {
  display: flex;
  align-items: center;
  justify-content: center;
  width: 24px;
  height: 24px;
  color: #0a6ed6;
  font: bold 15px "Noto Sans CJK SC", sans-serif;
}

.ime svg {
  fill: currentColor;
}

.ime button svg {
  width: 16px;
  height: 16px;
}

.ime .ime-more {
  background: linear-gradient(135deg, #f6e6fa, #e6f2ff 50%, #fff2c4);
}

.doc-tabs {
  display: flex;
  align-items: flex-start;
  height: 25px;
  padding-left: 2px;
  border-top: 1px solid #a0a0a0;
}

.doc-tab {
  display: flex;
  align-items: center;
  gap: 4px;
  height: 22px;
  padding: 0 12px 0 9px;
  border: 1px solid #d9d9d9;
  border-top: none;
}

.doc-tab.active {
  height: 24px;
  padding: 0 13px 0 12px;
  background: #fff;
}

.tab-close {
  color: #bdbdbd;
}

.active .tab-close {
  color: #e86a45;
}

.tab-close svg {
  width: 14px;
  height: 14px;
}

/* Status bar and taskbar */
.statusbar {
  position: relative;
  display: flex;
  align-items: center;
  height: 28px;
}

.statusbar p {
  flex: 1;
  padding-left: 2px;
}

.nav-style {
  display: flex;
  align-items: center;
  gap: 4px;
  height: 24px;
  padding: 0 8px 0 24px;
  border-left: 1px solid #cfcfcf;
}

.mouse {
  width: 10px;
  height: 14px;
  margin-right: 2px;
}

.caret {
  width: 8px;
  height: 5px;
}

.dimensions {
  padding: 4px 2px 4px 4px;
  border-left: 1px solid #cfcfcf;
}

.watermark {
  position: absolute;
  right: 14px;
  bottom: -3px;
  color: #8f8f8f;
  font: 20px "Liberation Sans", sans-serif;
  text-shadow: 1px 1px 0 #fff;
  opacity: 0.85;
}

.taskbar {
  display: flex;
  height: 8px;
  overflow: hidden;
  padding-left: 147px;
  background: #0b1f27;
}

.task {
  width: 48px;
  height: 8px;
  margin-right: 148px;
  background: #455157;
}

.task.orange {
  background: #9e5c28;
}

.taskbar time {
  margin: 3px 72px 0 auto;
  color: #fff;
}
```
